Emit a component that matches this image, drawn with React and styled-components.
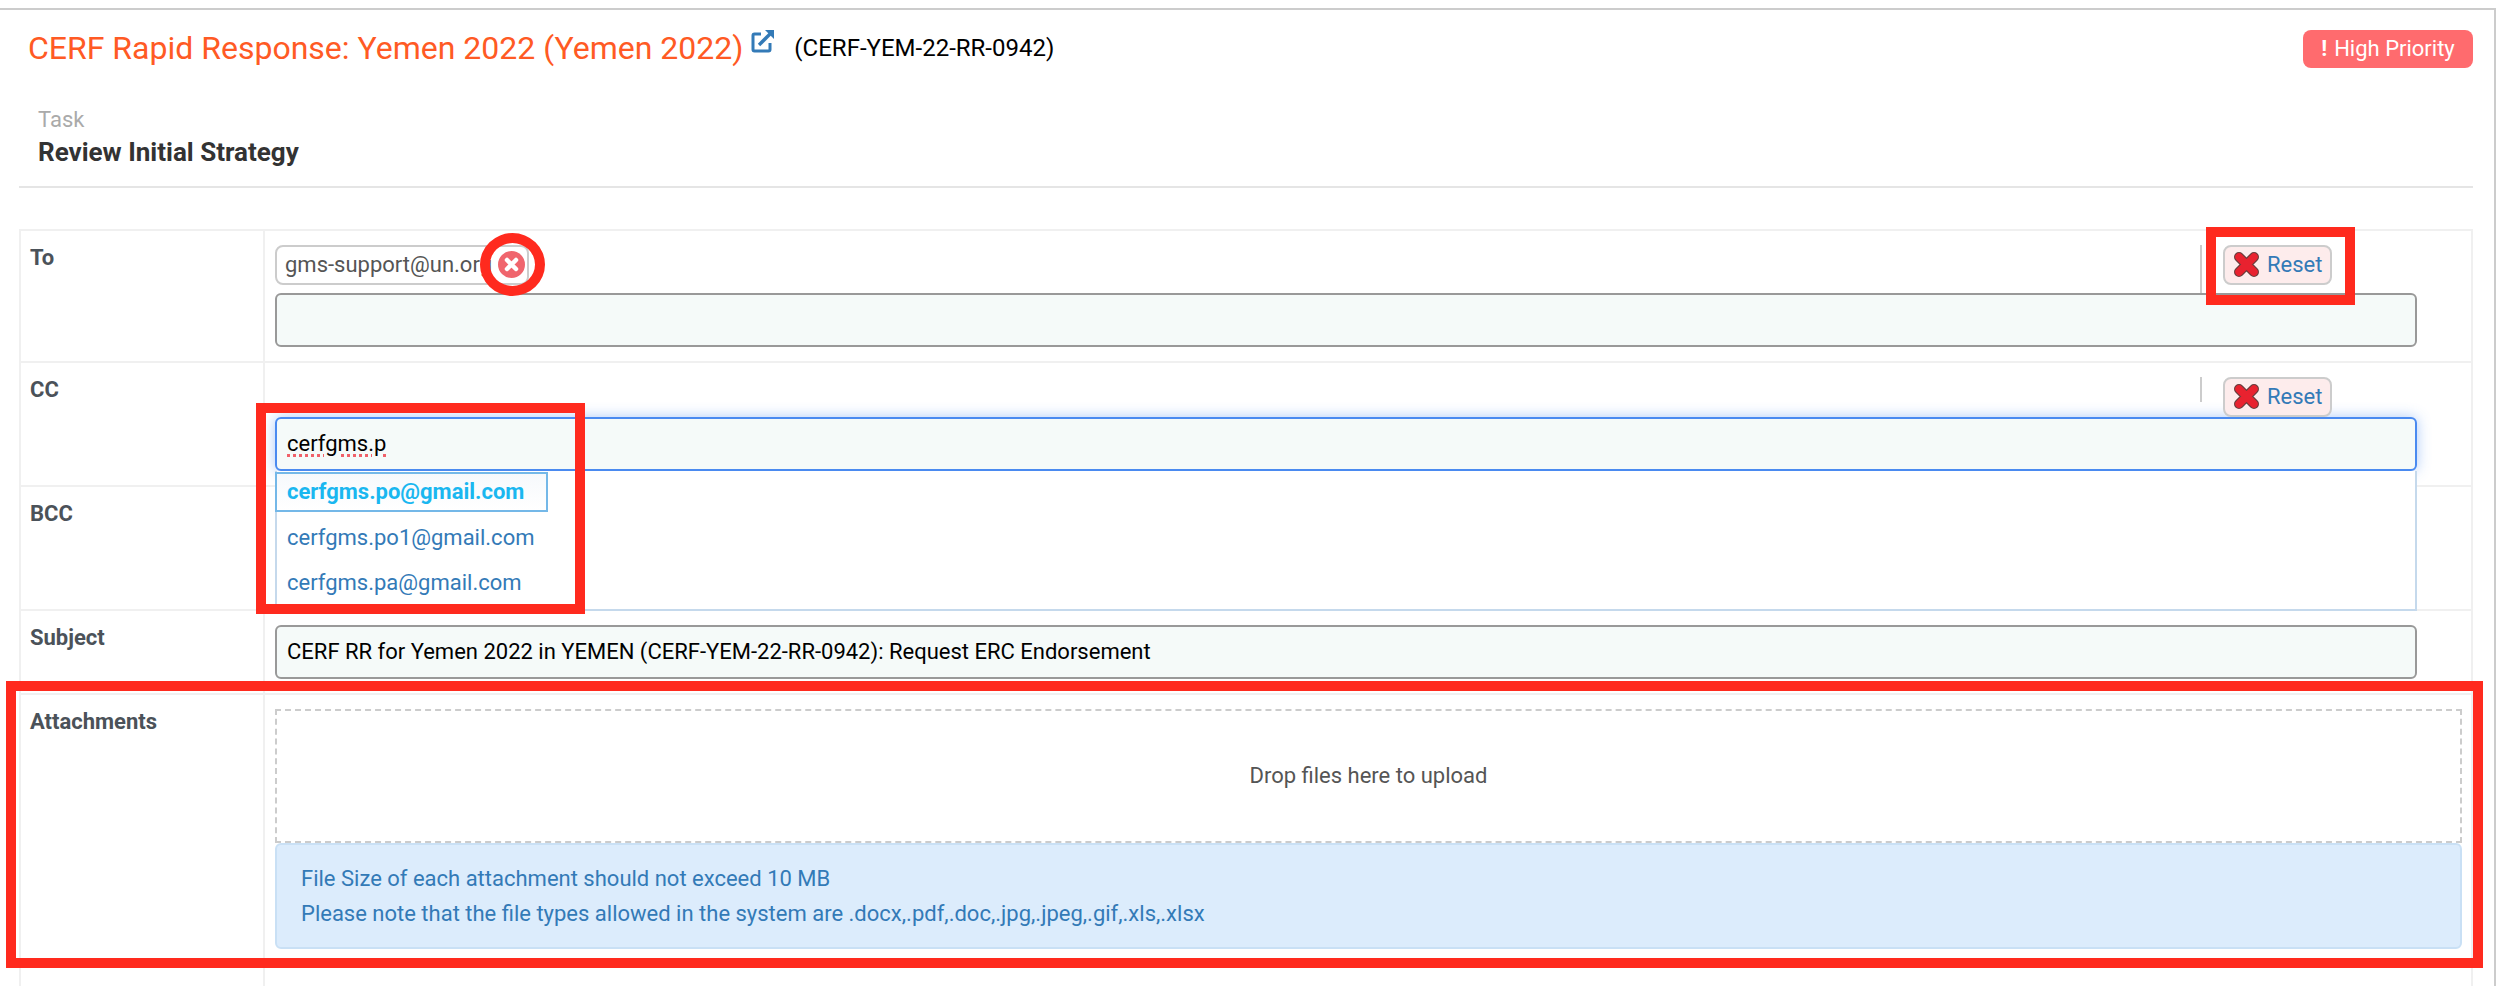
import React from 'react';
import styled, { createGlobalStyle } from 'styled-components';

const GlobalStyle = createGlobalStyle`
    html, body {
        margin: 0;
        padding: 0;
        background: #fff;
        font-family: Roboto, "Liberation Sans", sans-serif;
    }
`

const Page = styled.div`
    position: relative;
    height: 986px;
    padding-top: 8px;
    box-sizing: border-box;
    overflow: hidden;
`

const Card = styled.div`
    height: 978px;
    box-sizing: border-box;
    border-top: 2px solid #ccc;
    border-right: 2px solid #ccc;
    padding: 0 21px 0 19px;
`

const Header = styled.div`
    display: flex;
    align-items: flex-start;
    justify-content: space-between;
    height: 68px;
    padding-left: 9px;
`

const TitleWrap = styled.div`
    display: flex;
    align-items: flex-start;
    padding-top: 18px;
`

const Title = styled.span`
    font-size: 32px;
    line-height: 40px;
    color: #ff5a24;
`

const LinkIcon = styled.svg`
    width: 24px;
    height: 24px;
    margin: 1px 0 0 8px;
    color: #337ab7;
`

const Code = styled.span`
    font-size: 24px;
    line-height: 40px;
    color: #000;
    margin: 0 0 0 19px;
`

const Priority = styled.div`
    height: 38px;
    width: 170px;
    margin-top: 20px;
    border-radius: 8px;
    background: #ff6b6e;
    color: #fff;
    font-size: 22px;
    line-height: 38px;
    text-align: center;

    b {
        margin-right: 7px;
    }
`

const TaskBlock = styled.div`
    height: 110px;
    padding: 29px 0 0 19px;
    box-sizing: border-box;
    border-bottom: 2px solid #e5e5e5;
`

const TaskLabel = styled.div`
    font-size: 22px;
    line-height: 26px;
    color: #aaa;
`

const TaskName = styled.div`
    font-size: 26px;
    line-height: 32px;
    margin-top: 3px;
    font-weight: 700;
    color: #333;
`

const Table = styled.div`
    margin-top: 41px;
    border-top: 2px solid #f0f0f0;
    border-left: 2px solid #f0f0f0;
    border-right: 2px solid #f0f0f0;
`

const Row = styled.div`
    display: grid;
    grid-template-columns: 244px 1fr;
    height: ${p => p.$height}px;
    box-sizing: border-box;
    border-bottom: 2px solid #f0f0f0;
    ${p => p.$last && 'border-bottom: none;'}
`

const Label = styled.div`
    padding: 14px 0 0 9px;
    font-size: 22px;
    line-height: 26px;
    font-weight: 700;
    color: #4b5259;
    border-right: 2px solid #f0f0f0;
`

const Cell = styled.div`
    position: relative;
    padding: 14px 10px 0 10px;
`

const TopLine = styled.div`
    display: flex;
    align-items: flex-start;
    width: 2142px;
    height: ${p => p.$height}px;
`

const Chip = styled.div`
    position: relative;
    width: 254px;
    height: 40px;
    box-sizing: border-box;
    border: 2px solid #ccc;
    border-radius: 8px;
    padding-left: 8px;
    font-size: 22px;
    line-height: 36px;
    color: #555;
    white-space: nowrap;
    overflow: hidden;
`

const ChipRemove = styled.svg`
    position: absolute;
    left: 221px;
    top: 4px;
    width: 27px;
    height: 27px;
`

const ResetGroup = styled.div`
    display: flex;
    align-items: flex-start;
    margin-left: auto;
    margin-right: 85px;
`

const Separator = styled.div`
    width: 2px;
    height: ${p => p.$height}px;
    background: #ccc;
    margin-right: 21px;
`

const ResetButton = styled.div`
    display: flex;
    align-items: center;
    gap: 7px;
    width: 109px;
    height: 40px;
    box-sizing: border-box;
    padding: 0 0 2px 8px;
    border: 2px solid #ccc;
    border-radius: 8px;
    background: #fdecec;
    color: #337ab7;
    font-size: 22px;
`

const TextInput = styled.div`
    width: 2142px;
    height: 54px;
    box-sizing: border-box;
    border: 2px solid ${p => p.$focus ? '#4a8af0' : '#999'};
    border-radius: 6px;
    background: #f5faf9;
    padding-left: 10px;
    font-size: 22px;
    line-height: 50px;
    color: #000;
    ${p => p.$focus && 'box-shadow: 0 0 14px rgba(74, 138, 240, 0.45);'}
`

const Typed = styled.span`
    text-decoration: underline dotted #f0616a 3px;
    text-underline-offset: 3px;
`

const Suggestions = styled.div`
    position: absolute;
    left: 10px;
    top: 108px;
    width: 2142px;
    height: 140px;
    box-sizing: border-box;
    z-index: 2;
    background: #fff;
    border: 2px solid #c5d9ec;
    border-top: none;
`

const Suggestion = styled.div`
    height: 45px;
    padding-left: 10px;
    font-size: 22px;
    line-height: 44px;
    color: #337ab7;
`

const ActiveSuggestion = styled.div`
    width: 273px;
    height: 40px;
    margin: 1px 0 4px -2px;
    box-sizing: border-box;
    padding-left: 10px;
    border: 2px solid #74b8e8;
    font-size: 22px;
    font-weight: 700;
    line-height: 36px;
    color: #1ab7f0;
    background: linear-gradient(#f6f9fc, #fff);
`

const DropZone = styled.div`
    width: 2187px;
    height: 134px;
    box-sizing: border-box;
    border: 2px dashed #ccc;
    text-align: center;
    font-size: 22px;
    line-height: 130px;
    color: #555;
`

const Notice = styled.div`
    width: 2187px;
    height: 106px;
    box-sizing: border-box;
    padding: 16px 0 0 24px;
    background: #dcecfc;
    border: 2px solid #c9e0f5;
    border-radius: 6px;
    font-size: 22px;
    line-height: 35px;
    color: #337ab7;
`

const Marker = styled.div`
    position: absolute;
    z-index: 5;
    left: ${p => p.$x}px;
    top: ${p => p.$y}px;
    width: ${p => p.$w}px;
    height: ${p => p.$h}px;
    box-sizing: border-box;
    border: 10px solid #ff2a1e;
    border-radius: ${p => p.$round ? '50%' : '0'};
`

const CrossIcon = () => (
    <svg width="27" height="27" viewBox="0 0 27 27">
        <path d="M6 6L21 21M21 6L6 21" stroke="#6a3c3c" strokeWidth="10" strokeLinecap="round" />
        <path d="M6 6L21 21M21 6L6 21" stroke="#e8222f" strokeWidth="7.5" strokeLinecap="round" />
    </svg>
);

const ResetControl = ({ sepHeight }) => (
    <ResetGroup>
        <Separator $height={sepHeight} />
        <ResetButton><CrossIcon />Reset</ResetButton>
    </ResetGroup>
);

const App = () => (
    <Page>
        <GlobalStyle />
        <Card>
            <Header>
                <TitleWrap>
                    <Title>CERF Rapid Response: Yemen 2022 (Yemen 2022)</Title>
                    <LinkIcon viewBox="0 0 24 24" fill="none" stroke="currentColor">
                        <path d="M10 5H3.5a1.5 1.5 0 0 0-1.5 1.5v14a1.5 1.5 0 0 0 1.5 1.5h14a1.5 1.5 0 0 0 1.5-1.5V14" strokeWidth="3" />
                        <path d="M8 16L19 5" strokeWidth="3.4" />
                        <path d="M14 1h9v9z" fill="currentColor" stroke="none" />
                    </LinkIcon>
                    <Code>(CERF-YEM-22-RR-0942)</Code>
                </TitleWrap>
                <Priority><b>!</b>High Priority</Priority>
            </Header>
            <TaskBlock>
                <TaskLabel>Task</TaskLabel>
                <TaskName>Review Initial Strategy</TaskName>
            </TaskBlock>
            <Table>
                <Row $height={132}>
                    <Label>To</Label>
                    <Cell>
                        <TopLine $height={48}>
                            <Chip>
                                gms-support@un.org
                                <ChipRemove viewBox="0 0 27 27">
                                    <circle cx="13.5" cy="13.5" r="13.5" fill="#f0656d" />
                                    <path d="M9 9L18 18M18 9L9 18" stroke="#fff" strokeWidth="4.5" strokeLinecap="round" />
                                </ChipRemove>
                            </Chip>
                            <ResetControl sepHeight={48} />
                        </TopLine>
                        <TextInput />
                    </Cell>
                </Row>
                <Row $height={124}>
                    <Label>CC</Label>
                    <Cell>
                        <TopLine $height={40}>
                            <ResetControl sepHeight={25} />
                        </TopLine>
                        <TextInput $focus><Typed>cerfgms.p</Typed></TextInput>
                        <Suggestions>
                            <ActiveSuggestion>cerfgms.po@gmail.com</ActiveSuggestion>
                            <Suggestion>cerfgms.po1@gmail.com</Suggestion>
                            <Suggestion>cerfgms.pa@gmail.com</Suggestion>
                        </Suggestions>
                    </Cell>
                </Row>
                <Row $height={124}>
                    <Label>BCC</Label>
                    <Cell />
                </Row>
                <Row $height={84}>
                    <Label>Subject</Label>
                    <Cell>
                        <TextInput>CERF RR for Yemen 2022 in YEMEN (CERF-YEM-22-RR-0942): Request ERC Endorsement</TextInput>
                    </Cell>
                </Row>
                <Row $height={292} $last>
                    <Label>Attachments</Label>
                    <Cell>
                        <DropZone>Drop files here to upload</DropZone>
                        <Notice>
                            File Size of each attachment should not exceed 10 MB<br />
                            Please note that the file types allowed in the system are .docx,.pdf,.doc,.jpg,.jpeg,.gif,.xls,.xlsx
                        </Notice>
                    </Cell>
                </Row>
            </Table>
        </Card>
        <Marker $x={480} $y={233} $w={65} $h={63} $round />
        <Marker $x={2206} $y={227} $w={149} $h={78} />
        <Marker $x={256} $y={403} $w={329} $h={211} />
        <Marker $x={6} $y={681} $w={2477} $h={287} />
    </Page>
);

export default App;
